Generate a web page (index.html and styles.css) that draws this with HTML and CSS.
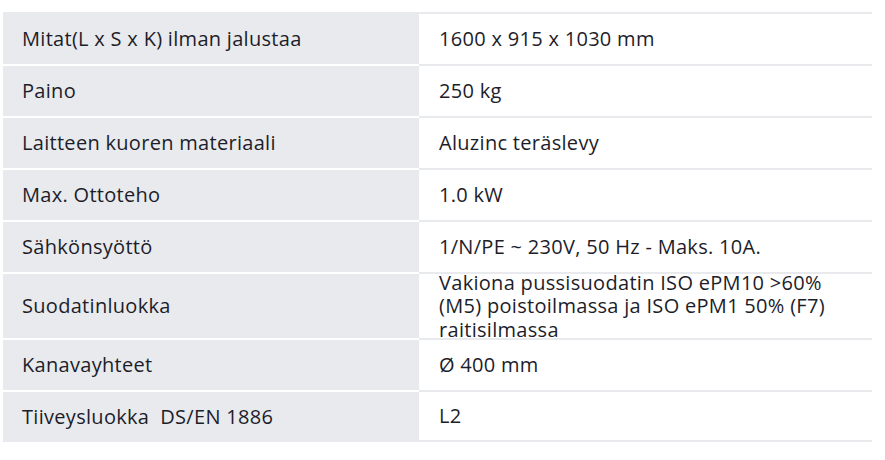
FILE: index.html
```html
<!DOCTYPE html>
<html lang="fi">
<head>
<meta charset="utf-8">
<link rel="stylesheet" href="styles.css">
</head>
<body>
<div class="specs">
  <div class="row"><div class="label">Mitat(L x S x K) ilman jalustaa</div><div class="value">1600 x 915 x 1030 mm</div></div>
  <div class="row"><div class="label">Paino</div><div class="value">250 kg</div></div>
  <div class="row"><div class="label">Laitteen kuoren materiaali</div><div class="value">Aluzinc teräslevy</div></div>
  <div class="row"><div class="label">Max. Ottoteho</div><div class="value">1.0 kW</div></div>
  <div class="row"><div class="label">Sähkönsyöttö</div><div class="value">1/N/PE ~ 230V, 50 Hz - Maks. 10A.</div></div>
  <div class="row tall"><div class="label">Suodatinluokka</div><div class="value">Vakiona pussisuodatin ISO ePM10 &gt;60% (M5) poistoilmassa ja ISO ePM1 50% (F7) raitisilmassa</div></div>
  <div class="row"><div class="label">Kanavayhteet</div><div class="value">Ø 400 mm</div></div>
  <div class="row last"><div class="label">Tiiveysluokka&nbsp; DS/EN 1886</div><div class="value">L2</div></div>
</div>
</body>
</html>
```
FILE: styles.css
```css
html, body {
  margin: 0;
  padding: 0;
  background: #ffffff;
}
body {
  padding: 12px 0 0 3px;
  font-family: "Open Sans", "Liberation Sans", sans-serif;
  color: #1d1d2a;
}
.specs {
  width: 869px;
}
.row {
  display: grid;
  grid-template-columns: 416px 453px;
  height: 52px;
}
.row.tall {
  height: 66px;
}
.label, .value {
  display: flex;
  align-items: center;
  overflow: hidden;
  font-size: 20px;
  letter-spacing: 0.3px;
  line-height: 23.5px;
}
.label {
  background: #e8eaed;
  border-top: 2px solid #ffffff;
  padding-left: 19px;
}
.value {
  border-top: 2px solid #e8eaed;
  padding-left: 20px;
  padding-right: 28px;
}
.row:first-child .label {
  border-top-color: #e8eaed;
}
.row.last .value {
  border-bottom: 2px solid #e8eaed;
}
```
